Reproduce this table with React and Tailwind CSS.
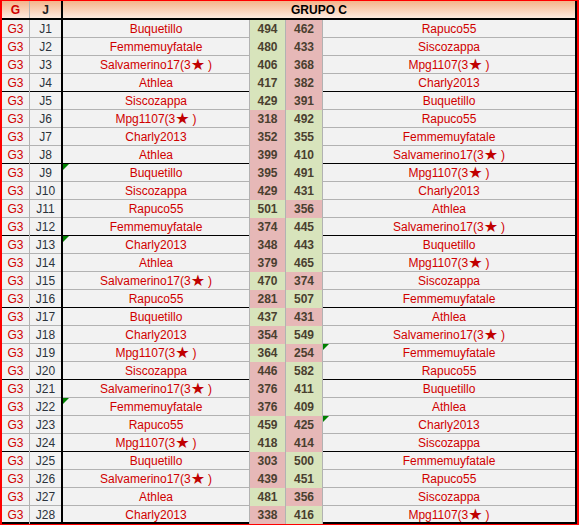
const rows = [
  ['J1', 'Buquetillo', 494, 462, 'Rapuco55'],
  ['J2', 'Femmemuyfatale', 480, 433, 'Siscozappa'],
  ['J3', 'Salvamerino17(3★)', 406, 368, 'Mpg1107(3★)'],
  ['J4', 'Athlea', 417, 382, 'Charly2013'],
  ['J5', 'Siscozappa', 429, 391, 'Buquetillo'],
  ['J6', 'Mpg1107(3★)', 318, 492, 'Rapuco55'],
  ['J7', 'Charly2013', 352, 355, 'Femmemuyfatale'],
  ['J8', 'Athlea', 399, 410, 'Salvamerino17(3★)'],
  ['J9', 'Buquetillo', 395, 491, 'Mpg1107(3★)'],
  ['J10', 'Siscozappa', 429, 431, 'Charly2013'],
  ['J11', 'Rapuco55', 501, 356, 'Athlea'],
  ['J12', 'Femmemuyfatale', 374, 445, 'Salvamerino17(3★)'],
  ['J13', 'Charly2013', 348, 443, 'Buquetillo'],
  ['J14', 'Athlea', 379, 465, 'Mpg1107(3★)'],
  ['J15', 'Salvamerino17(3★)', 470, 374, 'Siscozappa'],
  ['J16', 'Rapuco55', 281, 507, 'Femmemuyfatale'],
  ['J17', 'Buquetillo', 437, 431, 'Athlea'],
  ['J18', 'Charly2013', 354, 549, 'Salvamerino17(3★)'],
  ['J19', 'Mpg1107(3★)', 364, 254, 'Femmemuyfatale'],
  ['J20', 'Siscozappa', 446, 582, 'Rapuco55'],
  ['J21', 'Salvamerino17(3★)', 376, 411, 'Buquetillo'],
  ['J22', 'Femmemuyfatale', 376, 409, 'Athlea'],
  ['J23', 'Rapuco55', 459, 425, 'Charly2013'],
  ['J24', 'Mpg1107(3★)', 418, 414, 'Siscozappa'],
  ['J25', 'Buquetillo', 303, 500, 'Femmemuyfatale'],
  ['J26', 'Salvamerino17(3★)', 439, 451, 'Rapuco55'],
  ['J27', 'Athlea', 481, 356, 'Siscozappa'],
  ['J28', 'Charly2013', 338, 416, 'Mpg1107(3★)'],
];

// green comment markers (row number -> which player cell)
const marks = { 9: 'p1', 13: 'p1', 19: 'p2', 22: 'p1', 23: 'p2' };

function Marker() {
  return (
    <span className="absolute top-0 left-0 w-0 h-0 border-t-[6px] border-r-[6px] border-t-[#008000] border-r-transparent" />
  );
}

function Name({ name }) {
  const parts = name.split('★');
  if (parts.length === 1) return <span>{name}</span>;
  return (
    <span className="flex items-center">
      {parts[0]}
      <span className="font-['DejaVu_Sans'] text-[16px] leading-none text-[#c00000] mr-[3px]">★</span>
      {parts[1]}
    </span>
  );
}

function Score({ value, other }) {
  const win = value > other;
  return (
    <div
      className={`flex items-center justify-center font-bold text-[#4a3f2f] border-r border-[#b2b2b2] ${
        win ? 'bg-[#d8e4bc]' : 'bg-[#e6b8b7]'
      }`}
    >
      {value}
    </div>
  );
}

export default function App() {
  return (
    <div className="w-[579px] h-[525px] bg-[#f2f2f2] border-l-2 border-t border-r-2 border-b border-[#ff0000] font-['Liberation_Sans',Arial,sans-serif] text-[12px]">
      <div className="w-[575px] border-r-2 border-black">
        {/* header */}
        <div className="flex h-[19px] border-b-2 border-black bg-linear-to-b from-[#f4b48a] to-[#fdeadf] font-bold">
          <div className="w-[28px] border-r border-[#b2b2b2] flex items-center justify-center text-[#d00000]">G</div>
          <div className="w-[33px] border-r-2 border-black flex items-center justify-center text-[#1f1f1f]">J</div>
          <div className="flex-1 flex items-center justify-center text-black">GRUPO C</div>
        </div>

        {rows.map(([j, p1, s1, s2, p2], i) => {
          const n = i + 1;
          const last = n === rows.length;
          const sep = last ? 'border-b-2 border-black' : n % 4 === 0 ? 'border-b border-black' : 'border-b border-[#b2b2b2]';
          return (
            <div key={j} className={`grid grid-cols-[28px_33px_187px_36px_37px_1fr] h-[18px] ${sep}`}>
              <div className="border-r border-[#b2b2b2] flex items-center justify-center text-[#d00000]">G3</div>
              <div className="border-r-2 border-black flex items-center justify-center text-[#2b323c]">{j}</div>
              <div className="relative border-r border-[#b2b2b2] flex items-center justify-center text-[#d00000]">
                {marks[n] === 'p1' && <Marker />}
                <Name name={p1} />
              </div>
              <Score value={s1} other={s2} />
              <Score value={s2} other={s1} />
              <div className="relative flex items-center justify-center text-[#d00000]">
                {marks[n] === 'p2' && <Marker />}
                <Name name={p2} />
              </div>
            </div>
          );
        })}
      </div>
    </div>
  );
}
